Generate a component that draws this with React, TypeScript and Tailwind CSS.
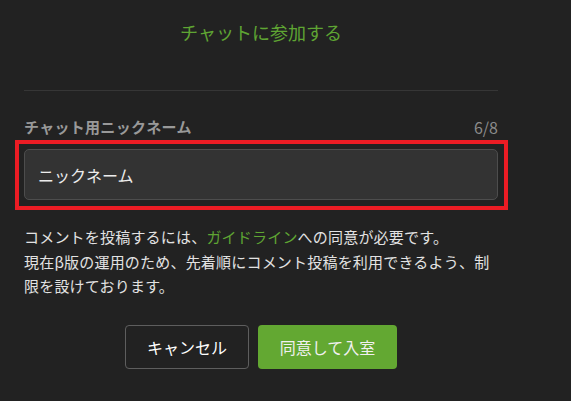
import React from 'react';

export default function App() {
  return (
    <div
      className="h-[401px] w-[571px] overflow-hidden bg-[#222222] pl-[24px]"
      style={{ fontFamily: '"Noto Sans CJK JP", "Noto Sans", sans-serif' }}
    >
      <div className="flex w-[474px] flex-col">
        <h2 className="pt-[19px] text-center text-[18px] leading-[27px] font-normal text-[#5fa533]">
          チャットに参加する
        </h2>

        <div className="mt-[44px] h-px bg-[#363636]" />

        {/* Nickname field */}
        <div className="mt-[25px] flex items-center justify-between">
          <label className="text-[15px] leading-[22px] font-bold tracking-[0.3px] text-[#999999]">
            チャット用ニックネーム
          </label>
          <span className="text-[16px] leading-[22px] text-[#8c8c8c]">6/8</span>
        </div>

        <div className="relative mt-[11px]">
          <input
            type="text"
            defaultValue="ニックネーム"
            className="h-[51px] w-full rounded-[5px] border border-[#4d4d4d] bg-[#333333] px-[13px] text-[16px] text-[#ececec] outline-none"
          />
          {/* highlight annotation */}
          <div className="pointer-events-none absolute -top-[9px] -right-[10px] -bottom-[10px] -left-[9px] border-4 border-[#ec1c24]" />
        </div>

        <p className="mt-[25px] text-[15px] leading-[24.5px] tracking-[0.2px] whitespace-nowrap text-[#e2e2e2]">
          コメントを投稿するには、<span className="text-[#5fa533]">ガイドライン</span>への同意が必要です。
          <br />
          現在β版の運用のため、先着順にコメント投稿を利用できるよう、制
          <br />
          限を設けております。
        </p>

        <div className="mt-[26px] flex justify-center gap-[9px]">
          <button className="h-[44px] w-[124px] rounded-[4px] border border-[#5e5e5e] bg-transparent text-[16px] text-white">
            キャンセル
          </button>
          <button className="h-[44px] w-[139px] rounded-[4px] bg-[#63a832] text-[16px] text-[#f0f0f0]">
            同意して入室
          </button>
        </div>
      </div>
    </div>
  );
}
